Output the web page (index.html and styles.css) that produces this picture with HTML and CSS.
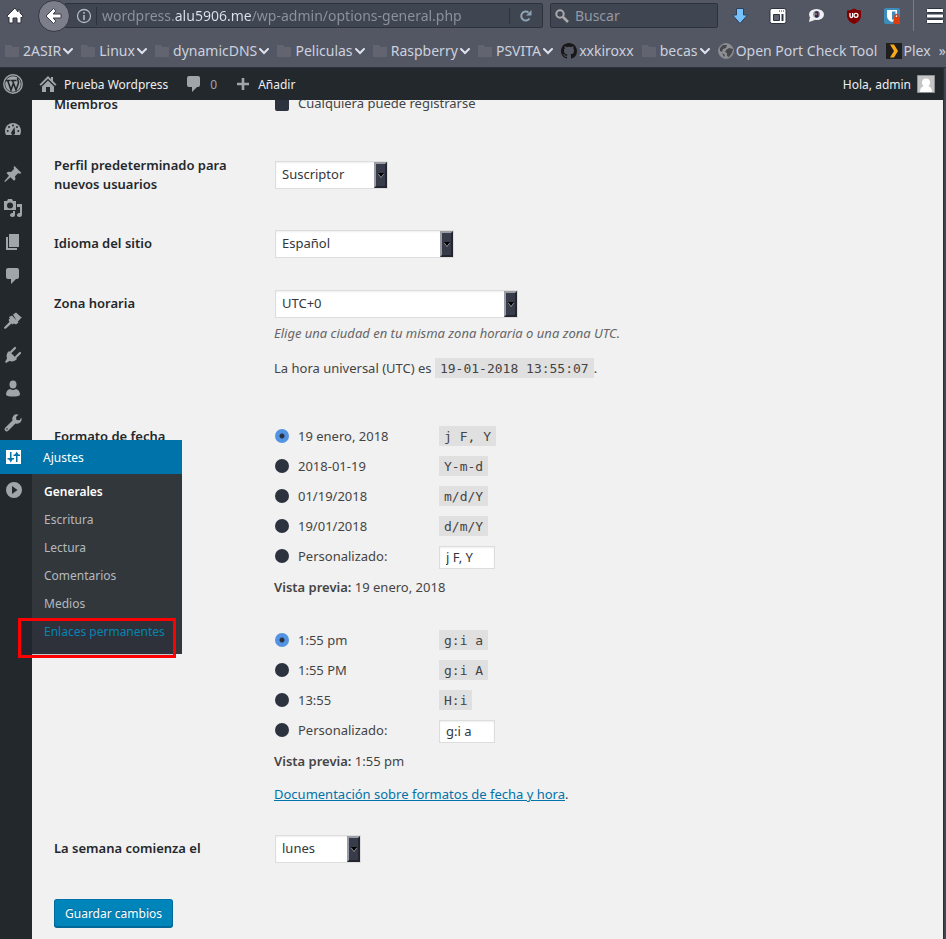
FILE: index.html
```html
<!DOCTYPE html>
<html lang="es">
<head>
<meta charset="utf-8">
<meta name="viewport" content="width=device-width, initial-scale=1">
<title>Ajustes generales</title>
<link rel="stylesheet" href="styles.css">
</head>
<body>
<svg class="defs" aria-hidden="true">
  <symbol id="folder" viewBox="0 0 14 13"><path d="M0 1h6l1 2h7v10H0z" fill="#62656f"/></symbol>
  <symbol id="chevron" viewBox="0 0 10 8"><path d="M1 2l4 4 4-4" fill="none" stroke="#dde2ee" stroke-width="2" stroke-linecap="round"/></symbol>
  <symbol id="comment" viewBox="0 0 20 20"><path d="M5 2h9q2 0 2 2v7q0 2-2 2h-1l-5 5v-5H5q-2 0-2-2V4q0-2 2-2z"/></symbol>
</svg>
<header class="browser">
  <div class="nav">
    <button class="tool home" aria-label="Inicio"><svg width="18" height="18" viewBox="0 0 18 18"><path d="M9 1L1 9l1 2 1-1v6h4v-5h4v5h4v-6l1 1 1-2-3-3V3h-2v2z" fill="#fff" stroke="#2e323c"/></svg></button>
    <button class="back" aria-label="Atrás"><svg width="18" height="18" viewBox="0 0 18 18"><path d="M8.500 1.500L1 9l7.500 7.500 2.500-2.300L8.200 11H16V7H8.200L11 3.800z" fill="#fff" stroke="#3a3d48"/></svg></button>
    <div class="address">
      <svg width="16" height="16" viewBox="0 0 16 16" fill="none" stroke="#b4b8c1"><circle cx="8" cy="8" r="6.500" stroke-width="1.300"/><path d="M8 7v5M8 4v1.700" stroke-width="1.600"/></svg>
      <input class="url" type="text" aria-label="Dirección" value="wordpress.alu5906.me/wp-admin/options-general.php">
      <button class="reload" aria-label="Recargar"><svg width="14" height="14" viewBox="0 0 14 14"><path d="M10.500 9.500A4.500 4.500 0 1 1 9.500 3.500" fill="none" stroke="#8fa3b5" stroke-width="2"/><path d="M12.500 1v5.500H7z" fill="#8fa3b5"/></svg></button>
    </div>
    <div class="search">
      <svg width="14" height="14" viewBox="0 0 14 14" fill="none" stroke="#aaa"><circle cx="5" cy="5" r="3.700" stroke-width="2"/><path d="M8 8l5 5" stroke-width="2.600"/></svg>
      <input type="text" aria-label="Buscar" placeholder="Buscar">
    </div>
    <div class="tools">
      <button class="tool" aria-label="Descargas"><svg width="18" height="18" viewBox="0 0 18 18"><path d="M5.500 1.500h7V8h4L9 16.500 1.500 8h4z" fill="#77c0ff" stroke="#2c4058"/></svg></button>
      <button class="tool" aria-label="Panel"><svg width="18" height="18" viewBox="0 0 18 18"><rect x="1" y="1.500" width="16" height="15" rx="2" fill="#fff" stroke="#2e323c"/><path d="M4.500 7.500h6v6h-6z" fill="#5c6270" stroke="#2e323c"/><path d="M13.500 7v7" stroke="#2e323c" stroke-width="2"/><path d="M10 4h1m1 0h1m1 0h1" stroke="#2e323c"/></svg></button>
      <button class="tool" aria-label="Chat"><svg width="18" height="18" viewBox="0 0 18 18"><ellipse cx="9.500" cy="7.500" rx="7.500" ry="5.500" fill="#f1f1f3"/><path d="M3 10L2 15l6-2z" fill="#eee"/><circle cx="9.500" cy="7.300" r="3.500" fill="#8f93a4"/><path d="M8 5q2-1.500 3.500 0v5q-2 1.500-3.500 0z" fill="#222b50"/><circle cx="9" cy="7" r="1.300" fill="#9c5752"/></svg></button>
      <button class="tool" aria-label="Bloqueador"><svg width="18" height="18" viewBox="0 0 18 18"><path d="M9 1.500q3 2 7 2V9q0 5-7 8-7-3-7-8V3.500q4 0 7-2z" fill="#800000"/><path d="M5 6v3q0 1.500 1.300 1.500T7.600 9V6" fill="none" stroke="#fff" stroke-width="1.300"/><circle cx="11" cy="8.300" r="2" fill="none" stroke="#fff" stroke-width="1.300"/></svg></button>
      <button class="tool" aria-label="Contraseñas"><svg width="18" height="18" viewBox="0 0 18 18"><rect x="1" y="1" width="16" height="16" rx="2" fill="#3c8dbc"/><path d="M4 3h10v6q0 4-5 6-5-2-5-6z" fill="#fff"/><path d="M9 4.500h3.500V9q0 2-3.500 4z" fill="#3c8dbc"/><path d="M12 10V9q0-1.500 1.500-1.500T15 9v1" fill="none" stroke="#de3e15" stroke-width="1.500"/><path d="M10.500 10H17v7h-6.500z" fill="#dc3d11"/></svg></button>
      <span class="rule"></span>
      <button class="tool" aria-label="Menú"><svg width="18" height="18" viewBox="0 0 18 18"><g fill="#fff" stroke="#2e323c"><rect x=".5" y="1.500" width="17" height="4" rx="1"/><rect x=".5" y="7" width="17" height="4" rx="1"/><rect x=".5" y="12.500" width="17" height="4" rx="1"/></g></svg></button>
    </div>
  </div>
  <nav class="bookmarks">
    <a href="#"><svg class="dir"><use href="#folder"/></svg>2ASIR<svg class="chev"><use href="#chevron"/></svg></a>
    <a href="#"><svg class="dir"><use href="#folder"/></svg>Linux<svg class="chev"><use href="#chevron"/></svg></a>
    <a href="#"><svg class="dir"><use href="#folder"/></svg>dynamicDNS<svg class="chev"><use href="#chevron"/></svg></a>
    <a href="#"><svg class="dir"><use href="#folder"/></svg>Peliculas<svg class="chev"><use href="#chevron"/></svg></a>
    <a href="#"><svg class="dir"><use href="#folder"/></svg>Raspberry<svg class="chev"><use href="#chevron"/></svg></a>
    <a href="#"><svg class="dir"><use href="#folder"/></svg>PSVITA<svg class="chev"><use href="#chevron"/></svg></a>
    <a href="#" class="site"><svg width="16" height="16" viewBox="0 0 16 16"><path d="M8 0C3.580 0 0 3.580 0 8c0 3.540 2.290 6.530 5.470 7.590.4.070.55-.17.55-.38 0-.19-.01-.82-.01-1.490-2.010.37-2.530-.49-2.690-.94-.09-.23-.48-.94-.82-1.130-.28-.15-.68-.52-.01-.53.63-.01 1.080.58 1.230.82.72 1.210 1.870.87 2.330.66.070-.52.280-.87.510-1.070-1.780-.2-3.640-.89-3.640-3.950 0-.87.310-1.590.82-2.150-.08-.2-.36-1.020.08-2.120 0 0 .67-.21 2.200.82.64-.18 1.320-.27 2-.27s1.360.09 2 .27c1.530-1.040 2.200-.82 2.200-.82.44 1.100.16 1.920.08 2.120.51.56.82 1.270.82 2.150 0 3.070-1.870 3.750-3.650 3.950.29.25.54.73.54 1.480 0 1.070-.01 1.930-.01 2.200 0 .21.15.46.55.38A8 8 0 0 0 16 8c0-4.420-3.580-8-8-8z" fill="#191717"/></svg>xxkiroxx</a>
    <a href="#"><svg class="dir"><use href="#folder"/></svg>becas<svg class="chev"><use href="#chevron"/></svg></a>
    <a href="#" class="site"><svg width="16" height="16" viewBox="0 0 16 16"><circle cx="8" cy="8" r="7.500" fill="#8d8f93" stroke="#85878b"/><path d="M2 5l3-3 4 0-1 3-3 1-1 3-2-1zM8 7l3-2 4 1-1 4-3 4-2-1 0-3-2-1zM4 10l3 2-1 2z" fill="#45484c"/></svg>Open Port Check Tool</a>
    <a href="#" class="site"><svg width="16" height="16" viewBox="0 0 16 16"><path d="M0 0h16v16H0z" fill="#1f1f1f"/><path d="M4 1.500h4L12 8l-4 6.500H4L8 8z" fill="#f9a81a"/></svg>Plex</a>
    <a href="#" class="more">»</a>
  </nav>
</header>
<div class="page">
  <div class="site-view">
    <header class="adminbar">
      <a href="#" class="logo" aria-label="WordPress"><svg width="20" height="20" viewBox="0 0 20 20"><circle cx="10" cy="10" r="9.200" fill="none" stroke="#a0a5aa" stroke-width="1.400"/><circle cx="10" cy="10" r="7.800" fill="#a0a5aa"/><path d="M3 6.500h4.500M8 6.500h5.500M4.700 6.500L8 16l2.500-7M9.500 6.500L13 16l2.200-6q.8-2-.2-3.500-1-1.500.3-2.500" fill="none" stroke="#23282d" stroke-width="1.600"/></svg></a>
      <a href="#" class="site-name"><svg width="20" height="20" viewBox="0 0 20 20" fill="#a0a5aa"><path d="M10 2l3 3V3h2v4l3.500 3.500-1.300 1.300L10 4.800l-7.200 7L1.500 10.500z"/><path d="M10 6.500l6 6V18h-4v-5H8v5H4v-5.500z"/></svg>Prueba Wordpress</a>
      <a href="#" class="count"><svg width="20" height="20" fill="#a0a5aa"><use href="#comment"/></svg>0</a>
      <a href="#" class="add"><svg width="14" height="14" viewBox="0 0 14 14"><path d="M7 1v12M1 7h12" stroke="#a0a5aa" stroke-width="2.600"/></svg>Añadir</a>
      <a href="#" class="account">Hola, admin<svg width="18" height="18" viewBox="0 0 18 18"><path d="M.5.500h17v17H.5z" fill="#c4c4c4" stroke="#8c8f94"/><circle cx="9" cy="7.500" r="4" fill="#fff"/><path d="M3 17q0-5 4-6h4q4 1 4 6z" fill="#fff"/></svg></a>
    </header>
    <div class="workspace">
      <nav class="sidebar">
        <a href="#" aria-label="Escritorio"><svg viewBox="0 0 20 20"><path d="M3 16q-1-2-1-4a8 8 0 0 1 16 0q0 2-1 4z"/><g fill="#23282d"><circle cx="10" cy="6.500" r="1"/><circle cx="6" cy="8" r="1"/><circle cx="14" cy="8" r="1"/><circle cx="4.700" cy="12" r="1"/><circle cx="15.300" cy="12" r="1"/><path d="M11.500 8l.5 5.500a2 2 0 1 1-3.200-1z"/></g></svg></a>
        <a href="#" class="group" aria-label="Entradas"><svg viewBox="0 0 20 20"><path d="M11.500 2l7 7-1.500.8-2-.5-3 3 .5 3-1.500 1.500-3.500-3.500L2 18l-.7-.7L6 11.800 3.500 9 5 7.700l3 .3 3-3-.4-2z"/></svg></a>
        <a href="#" aria-label="Medios"><svg viewBox="0 0 20 20"><path fill-rule="evenodd" d="M1 3h3l1-2h4l1 2h3v9H1zM7 4.500a3 3 0 1 0 0 6 3 3 0 0 0 0-6z"/><path d="M14 6h5v11a2.500 2 0 1 1-2-2V9h-3zM12 13v4a2.500 2 0 1 1-2-2v-2z"/></svg></a>
        <a href="#" aria-label="Páginas"><svg viewBox="0 0 20 20"><path d="M6 2h10v13H6zM3 5h2v11h9v2H3z"/></svg></a>
        <a href="#" aria-label="Comentarios"><svg><use href="#comment"/></svg></a>
        <a href="#" class="group" aria-label="Apariencia"><svg viewBox="0 0 20 20"><path d="M10 3.500L13 1.500l5 4.500 1 0-4.500 5zM9 4.500l6.500 7-2.500 2-2-1-1.500 1-1-1L3 17.500q-2 1-2-1l5.500-5.800L5.500 9l1.300-1.500L6 6z"/></svg></a>
        <a href="#" aria-label="Plugins"><svg viewBox="0 0 20 20"><path d="M6 6l8 8q-3 3.500-7.500 2L3 18l-1-1 2-3.500Q2.500 9 6 6z"/><path d="M8 7l4-4M13 12l4-4" stroke="#a0a5aa" stroke-width="2.200" stroke-linecap="round"/></svg></a>
        <a href="#" aria-label="Usuarios"><svg viewBox="0 0 20 20"><ellipse cx="10" cy="5.500" rx="3.500" ry="4"/><path d="M3 16q0-5 4-6 3 2 6 0 4 1 4 6-2 1.500-7 1.500T3 16z"/></svg></a>
        <a href="#" aria-label="Herramientas"><svg viewBox="0 0 20 20"><path d="M16.700 7.200L13.500 7 13 4l2.500-2.300q-3-1-5 1t-1 4.800L2.200 14.700a2 2 0 0 0 3 3l7.300-7.200q3 .8 5-1.200t.7-4.800zM4 16.800a.8.800 0 1 1 0-1.600.8.800 0 0 1 0 1.600z"/></svg></a>
        <div class="current">
          <a href="#" class="current-link"><svg viewBox="0 0 20 20"><path fill="#fff" d="M3 3h15v14H3z"/><path d="M7 5h1.500v6H11v1.500H9.500L7.800 15.500 6 12.500H4.500V11H7zM13 15h1.500V9H17V7.500h-1.500L13.700 4.500 12 7.500h-1.500V9H13z" fill="#0073aa"/></svg><span>Ajustes</span></a>
          <div class="flyout">
            <a href="#" class="active">Generales</a>
            <a href="#">Escritura</a>
            <a href="#">Lectura</a>
            <a href="#">Comentarios</a>
            <a href="#">Medios</a>
            <a href="#" class="hover">Enlaces permanentes</a>
            <span class="marker"></span>
          </div>
        </div>
        <a href="#" aria-label="Cerrar menú"><svg viewBox="0 0 20 20"><path fill-rule="evenodd" d="M11 1a8 8 0 1 0 0 16 8 8 0 0 0 0-16zM9 5l5.500 4L9 13z"/></svg></a>
      </nav>
      <main>
        <form>
          <div class="row members">
            <div class="th">Miembros</div>
            <div class="td"><label class="check"><input type="checkbox">Cualquiera puede registrarse</label></div>
          </div>
          <div class="row role">
            <label class="th" for="role">Perfil predeterminado para nuevos usuarios</label>
            <div class="td"><span class="pick w-role"><select id="role"><option>Suscriptor</option></select></span></div>
          </div>
          <div class="row">
            <label class="th" for="lang">Idioma del sitio</label>
            <div class="td"><span class="pick w-lang"><select id="lang"><option>Español</option></select></span></div>
          </div>
          <div class="row zone">
            <label class="th" for="zone">Zona horaria</label>
            <div class="td"><span class="pick w-zone"><select id="zone"><option>UTC+0</option></select></span>
              <p class="hint">Elige una ciudad en tu misma zona horaria o una zona UTC.</p>
              <p class="utc">La hora universal (UTC) es <code>19-01-2018 13:55:07</code>.</p>
            </div>
          </div>
          <div class="row formats">
            <div class="th">Formato de fecha</div>
            <div class="td">
              <div class="opt"><label><input type="radio" name="date" checked>19 enero, 2018</label><code>j F, Y</code></div>
              <div class="opt"><label><input type="radio" name="date">2018-01-19</label><code>Y-m-d</code></div>
              <div class="opt"><label><input type="radio" name="date">01/19/2018</label><code>m/d/Y</code></div>
              <div class="opt"><label><input type="radio" name="date">19/01/2018</label><code>d/m/Y</code></div>
              <div class="opt"><label><input type="radio" name="date">Personalizado:</label><input class="custom" type="text" aria-label="Formato de fecha personalizado" value="j F, Y"></div>
              <p class="preview"><strong>Vista previa:</strong> 19 enero, 2018</p>
            </div>
          </div>
          <div class="row formats">
            <div class="th"></div>
            <div class="td">
              <div class="opt"><label><input type="radio" name="time" checked>1:55 pm</label><code>g:i a</code></div>
              <div class="opt"><label><input type="radio" name="time">1:55 PM</label><code>g:i A</code></div>
              <div class="opt"><label><input type="radio" name="time">13:55</label><code>H:i</code></div>
              <div class="opt"><label><input type="radio" name="time">Personalizado:</label><input class="custom" type="text" aria-label="Formato de hora personalizado" value="g:i a"></div>
              <p class="preview"><strong>Vista previa:</strong> 1:55 pm</p>
              <p class="doc"><a href="#">Documentación sobre formatos de fecha y hora</a>.</p>
            </div>
          </div>
          <div class="row">
            <label class="th" for="week">La semana comienza el</label>
            <div class="td"><span class="pick w-week"><select id="week"><option>lunes</option></select></span></div>
          </div>
          <button class="save" type="button">Guardar cambios</button>
        </form>
      </main>
    </div>
  </div>
  <div class="edge"></div>
</div>
</body>
</html>
```
FILE: styles.css
```css
*, *::before, *::after { box-sizing: border-box; }
html, body { height: 100%; }
body {
  margin: 0;
  display: flex;
  flex-direction: column;
  overflow: hidden;
  background: #f1f1f1;
  font-family: "Noto Sans", "Open Sans", sans-serif;
  font-size: 13px;
  color: #444;
}
a { color: inherit; text-decoration: none; }
button, input, select { font: inherit; color: inherit; margin: 0; }
button { padding: 0; border: 0; background: none; }
p { margin: 0; }
svg { display: block; flex: none; }
.defs { position: absolute; width: 0; height: 0; }

/* Browser toolbar */
.browser { flex: none; background: #535764; border-bottom: 1px solid #2e323c; color: #ccd1de; }
.nav { display: flex; align-items: center; height: 31px; }
.home { margin-left: 6px; }
.back {
  display: grid; place-items: center;
  width: 32px; height: 32px; margin-left: 14px; flex: none; z-index: 1;
  border: 1px solid #343843; border-radius: 50%; background: #7c7f8a;
}
.address, .search {
  display: flex; align-items: center; min-width: 0; height: 25px;
  background: #404552; border: 1px solid #2e323c; border-radius: 2px;
}
.address { flex: 480; margin-left: -6px; padding-left: 11px; font-size: 14px; }
.address input, .search input { min-width: 0; flex: 1; border: 0; padding: 0; outline: 0; background: none; }
.address .url {
  margin-left: 4px; padding-left: 5px; height: 18px; line-height: 18px; border-left: 1px solid #2e323c;
  color: transparent;
  background: linear-gradient(90deg, #8f939d 77px, #dde2ee 77px, #dde2ee 154px, #8f939d 154px);
  -webkit-background-clip: text; background-clip: text;
}
.reload { flex: none; width: 33px; height: 16px; border-left: 1px solid #2e323c; display: grid; place-items: center; }
.search { flex: 167; margin-left: 7px; padding-left: 4px; gap: 6px; font-size: 14px; }
.search input::placeholder { color: #9498a3; opacity: 1; }
.tools { display: flex; align-items: center; gap: 20px; margin: 0 2px 0 13px; }
.rule { width: 1px; height: 31px; margin: 0 -8px; background: #777b86; }
.bookmarks { display: flex; justify-content: space-between; align-items: center; height: 36px; padding: 3px 0 0 5px; font-size: 14px; white-space: nowrap; }
.bookmarks a { display: flex; align-items: center; gap: 2px; }
.dir { width: 14px; height: 13px; margin-right: 2px; }
.chev { width: 10px; height: 8px; }

/* Web page */
.page { flex: 1; min-height: 0; display: flex; }
.edge { width: 3px; border-left: 1px solid #2b2e39; background: #404552; }
.site-view { flex: 1; min-width: 0; display: flex; flex-direction: column; }
.adminbar { display: flex; align-items: center; height: 32px; padding: 0 8px 0 3px; flex: none; background: #23282d; color: #eee; font-size: 12px; z-index: 1; }
.adminbar a { display: flex; align-items: center; }
.site-name { margin-left: 15px; gap: 6px; }
.count { margin-left: 16px; gap: 6px; color: #a0a5aa; }
.add { margin-left: 19px; gap: 8px; }
.account { margin-left: auto; gap: 6px; }
.workspace { flex: 1; min-height: 0; display: flex; }
.sidebar { width: 32px; flex: none; padding-top: 12px; background: #23282d; font-size: 12px; z-index: 1; }
.sidebar > a, .current-link { display: flex; align-items: center; height: 34px; padding-left: 3px; }
.sidebar svg { width: 20px; height: 20px; fill: #a0a5aa; }
.sidebar > .group { margin-top: 11px; }
.current { position: relative; }
.current-link { width: 182px; gap: 20px; background: #0073aa; color: #fff; }
.flyout { position: absolute; left: 32px; top: 34px; width: 150px; padding: 4px 0 8px; background: #32373c; color: #b4b9be; }
.flyout a { display: block; height: 28px; line-height: 28px; padding-left: 12px; white-space: nowrap; }
.flyout .active { color: #fff; font-weight: 600; }
.flyout .hover { color: #00a0d2; }
.marker { position: absolute; left: -14px; bottom: -4px; width: 158px; height: 40px; border: 3px solid #f00; background: rgba(30, 25, 50, .2); }

/* Settings form */
main { flex: 1; min-width: 0; overflow: hidden; padding: 0 20px 0 22px; background: #f1f1f1; }
.row { display: grid; grid-template-columns: 220px 1fr; }
.th { width: 190px; padding-top: 20px; line-height: 19px; font-weight: 600; color: #23282d; }
.td { padding: 16px 0; }
.members { height: 61px; margin-top: -25px; }
.members .td { padding-top: 18px; }
.check { display: flex; align-items: center; gap: 9px; line-height: 21px; }
.check input { appearance: none; width: 14px; height: 14px; margin-left: 1px; border-radius: 2px; background: #2d323f; }
.role { height: 78px; }
.role .td { padding-top: 25px; }
.zone { height: 133px; }
.pick { position: relative; display: block; height: 28px; margin-left: 1px; }
.pick select { appearance: none; width: 100%; height: 100%; padding: 0 6px 2px; border: 1px solid #ddd; border-radius: 0; background: #fff; color: #32373c; box-shadow: inset 0 1px 2px rgba(0, 0, 0, .07); }
.pick::after { content: ""; position: absolute; right: 1px; top: 1px; bottom: 1px; width: 13px; border: 2px solid; border-color: #9b9da5 #23262f #23262f #9b9da5; background: #383c4a; pointer-events: none; }
.pick::before { content: ""; position: absolute; z-index: 1; right: 4px; top: 12px; border: 3px solid transparent; border-top: 4px solid #000; border-bottom: 0; filter: drop-shadow(0 1px 0 #aaa); pointer-events: none; }
.w-role { width: 113px; }
.w-lang { width: 179px; }
.w-zone { width: 243px; }
.w-week { width: 86px; }
.hint { margin-top: 5px; line-height: 21px; font-style: italic; color: #666; }
.utc { margin-top: 14px; line-height: 21px; }
code { display: inline-block; height: 20px; line-height: 21px; padding: 0 5px; background: #e0e0e0; font-family: "DejaVu Sans Mono", monospace; font-size: 13px; }
.formats { height: 204px; }
.formats + .formats { height: 208px; }
.formats .td { padding-top: 14px; }
.opt { display: flex; align-items: center; height: 30px; }
.opt label { display: flex; align-items: center; gap: 9px; width: 165px; }
.opt input[type="radio"] { appearance: none; width: 14px; height: 14px; margin-left: 1px; border-radius: 50%; background: #2d323f; }
.opt input[type="radio"]:checked { background: radial-gradient(circle, #2d323f 2px, #5294e2 3px); }
.custom { width: 56px; height: 23px; margin-top: 2px; padding: 0 6px; border: 1px solid #ddd; background: #fff; color: #32373c; box-shadow: inset 0 1px 2px rgba(0, 0, 0, .07); }
.preview { margin-top: 6px; line-height: 21px; }
.preview strong { font-weight: 600; }
.doc { margin-top: 12px; line-height: 21px; }
.doc a { color: #0073aa; text-decoration: underline; }
.save { display: block; height: 28px; margin-top: 20px; padding: 0 10px; border: 1px solid #006799; border-top-color: #0073aa; border-radius: 3px; background: #0085ba; color: #fff; font-size: 12px; box-shadow: 0 1px 0 #006799; text-shadow: 0 -1px 1px #006799; }
```
